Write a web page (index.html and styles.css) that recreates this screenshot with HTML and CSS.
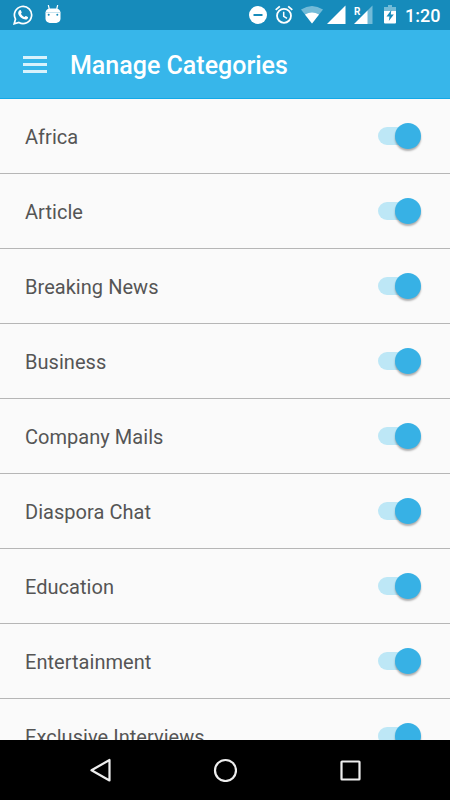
FILE: index.html
```
<!DOCTYPE html>
<html lang="en">
<head>
  <meta charset="UTF-8" />
  <meta name="viewport" content="width=device-width, initial-scale=1.0"/>
  <title>Manage Categories</title>
  <link rel="stylesheet" href="styles.css">
</head>
<body>
  <div class="screen">
    <!-- status bar -->
    <div class="status-bar">
      <div class="status-left">
        <svg width="20" height="20" viewBox="0 0 20 20">
          <path d="M1.2 18.8l1.3-4.7A8.6 8.6 0 1 1 5.9 17.5z" fill="none" stroke="#fff" stroke-width="1.7"/>
          <path d="M6.4 5.4c.5-.5 1.2-.5 1.5.1l.8 1.8c.2.5-.5 1.1-.8 1.5.9 1.6 2 2.6 3.6 3.3.5-.5 1-1.3 1.5-1.1l1.8.9c.5.3.2 1.3-.2 1.8-1 1.2-2.7 1-4.2.4-2.2-1-3.9-2.7-4.9-4.700-.6-1.400-.3-3 .9-4z" fill="#fff"/>
        </svg>
        <svg width="16" height="20" viewBox="0 0 16 20">
          <path d="M3.3 0l1 4M12.7 0l-1 4" stroke="#fff" stroke-width="1.200"/>
          <path d="M.5 8C.5 5 2.500 3.500 5 3.500h6c2.500 0 4.500 1.500 4.500 4.500v5.500c0 3-2.500 4.500-5.500 4.500H6c-3 0-5.500-1.500-5.500-4.500z" fill="#fff"/>
          <path d="M.5 7.500h15" stroke="#b9dceb" stroke-width=".8"/>
          <circle cx="3.700" cy="9.800" r="1" fill="#168bbb"/>
          <circle cx="12.300" cy="9.800" r="1" fill="#168bbb"/>
        </svg>
      </div>
      <div class="status-right">
        <svg class="dnd" width="18" height="18" viewBox="0 0 18 18">
          <circle cx="9" cy="9" r="9" fill="#fff"/>
          <path d="M4.500 9h9" stroke="#168bbb" stroke-width="2"/>
        </svg>
        <svg class="alarm" width="18" height="19" viewBox="0 0 18 19">
          <circle cx="9" cy="10.800" r="7" fill="none" stroke="#fff" stroke-width="1.800"/>
          <path d="M.7 4.900l4.100-3.500M17.300 4.900l-4.100-3.500" stroke="#fff" stroke-width="1.800"/>
          <path d="M8.700 6.800v4.500l3.300 2" fill="none" stroke="#fff" stroke-width="1.500"/>
        </svg>
        <svg class="wifi" width="22" height="18" viewBox="0 0 22 18">
          <path d="M0 3.500Q11-3.500 22 3.500L11 17.500z" fill="#73bbd8"/>
          <path d="M4 8.600q7-4.400 14 0L11 17.500z" fill="#fff"/>
        </svg>
        <svg class="signal" width="19" height="19" viewBox="0 0 19 19">
          <path d="M0 19L18.500.5V19z" fill="#fff"/>
        </svg>
        <svg class="roaming" width="19" height="19" viewBox="0 0 19 19">
          <path d="M13 6L18.500.5V19H13z" fill="#73bbd8"/>
          <path d="M0 19L13.500 5.500V19z" fill="#fff"/>
          <text class="roaming-label" x="0" y="9.500">R</text>
        </svg>
        <svg class="battery" width="12" height="19" viewBox="0 0 12 19">
          <path d="M0 2h4V0h4v2h4v4H0z" fill="#73bbd8"/>
          <path d="M0 6h12v11.500q0 1-1 1H1q-1 0-1-1z" fill="#fff"/>
          <path d="M7.300 5L2.500 11.500h3L4.800 16l5-6.500h-3z" fill="#168bbb"/>
        </svg>
        <span class="clock">1:20</span>
      </div>
    </div>

    <!-- app bar -->
    <div class="app-bar">
      <div class="menu-icon"><span></span><span></span><span></span></div>
      <div class="title">Manage Categories</div>
    </div>

    <div class="list">
      <div class="row"><span class="name">Africa</span><div class="switch"><div class="thumb"></div></div></div>
      <div class="row"><span class="name">Article</span><div class="switch"><div class="thumb"></div></div></div>
      <div class="row"><span class="name">Breaking News</span><div class="switch"><div class="thumb"></div></div></div>
      <div class="row"><span class="name">Business</span><div class="switch"><div class="thumb"></div></div></div>
      <div class="row"><span class="name">Company Mails</span><div class="switch"><div class="thumb"></div></div></div>
      <div class="row"><span class="name">Diaspora Chat</span><div class="switch"><div class="thumb"></div></div></div>
      <div class="row"><span class="name">Education</span><div class="switch"><div class="thumb"></div></div></div>
      <div class="row"><span class="name">Entertainment</span><div class="switch"><div class="thumb"></div></div></div>
      <div class="row"><span class="name">Exclusive Interviews</span><div class="switch"><div class="thumb"></div></div></div>
    </div>

    <!-- navigation buttons -->
    <div class="nav-bar">
      <svg width="24" height="24" viewBox="0 0 24 24">
        <path d="M21.500 2v20.500L3.500 12.300z"/>
      </svg>
      <svg width="24" height="24" viewBox="0 0 24 24">
        <circle cx="12.500" cy="12.500" r="10.500"/>
      </svg>
      <svg width="24" height="24" viewBox="0 0 24 24">
        <rect x="3.500" y="3.500" width="18" height="18" rx=".5"/>
      </svg>
    </div>
  </div>
</body>
</html>
```
FILE: styles.css
```
body {
  margin: 0;
  font-family: Roboto, "Liberation Sans", sans-serif;
}
.screen {
  display: flex;
  flex-direction: column;
  width: 450px;
  height: 800px;
  overflow: hidden;
  background: #fafafa;
}
svg {
  display: block;
  flex: none;
}

/* status bar */
.status-bar {
  display: flex;
  justify-content: space-between;
  flex: none;
  height: 30px;
  box-sizing: border-box;
  padding: 5px 10px 0 13px;
  background: #168bbb;
}
.status-left {
  display: flex;
  gap: 12px;
}
.status-right {
  display: flex;
}
.dnd {
  margin: 1px 8px 0 0;
}
.alarm {
  margin-right: 8px;
}
.wifi {
  margin: 1px 4px 0 0;
}
.signal {
  margin-right: 8px;
}
.roaming {
  margin-right: 11px;
  overflow: visible;
}
.roaming-label {
  font-size: 10px;
  font-weight: bold;
  fill: #fff;
}
.battery {
  margin-right: 9px;
}
.clock {
  width: 35px;
  font-size: 18px;
  font-weight: 500;
  line-height: 22px;
  color: #fff;
  white-space: nowrap;
}

/* app bar */
.app-bar {
  display: flex;
  align-items: center;
  flex: none;
  height: 69px;
  box-sizing: border-box;
  padding: 1px 23px 0;
  background: #37b6ea;
  border-bottom: 1px solid #12a9e8;
}
.menu-icon {
  display: flex;
  flex-direction: column;
  gap: 4px;
  width: 24px;
  margin-right: 23px;
}
.menu-icon span {
  height: 3px;
  background: #d9f2fc;
}
.title {
  font-size: 25px;
  font-weight: 500;
  line-height: 30px;
  color: #fff;
  padding-top: 3px;
}

/* category list */
.list {
  flex: 1;
  min-height: 0;
  overflow: hidden;
}
.row {
  display: flex;
  align-items: center;
  justify-content: space-between;
  height: 75px;
  box-sizing: border-box;
  padding: 0 29px 1px 25px;
  border-bottom: 1px solid #b6b6b6;
}
.name {
  font-size: 20px;
  line-height: 24px;
  padding-top: 2px;
  letter-spacing: 0.04px;
  color: #555;
}
.switch {
  display: flex;
  align-items: center;
  justify-content: flex-end;
  width: 43px;
  height: 18px;
  background: linear-gradient(to right, #bde7f6 32px, transparent 32px);
  border-radius: 9px;
}
.thumb {
  flex: none;
  width: 26px;
  height: 26px;
  border-radius: 50%;
  background: #37b1e5;
  box-shadow: 0 2px 2px rgba(0,0,0,0.3);
}

/* bottom navigation */
.nav-bar {
  display: flex;
  justify-content: center;
  align-items: center;
  gap: 101px;
  flex: none;
  height: 60px;
  background: #000;
}
.nav-bar svg {
  fill: none;
  stroke: #eee;
  stroke-width: 2.2;
  stroke-linejoin: round;
}
```
